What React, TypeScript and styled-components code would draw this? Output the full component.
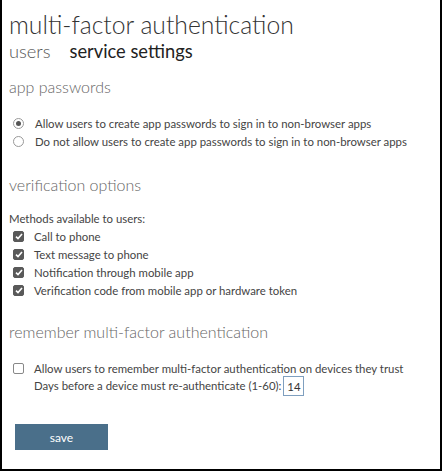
import React from "react";
import styled, { createGlobalStyle } from "styled-components";

const Global = createGlobalStyle`
  html, body { margin: 0; padding: 0; background: #fff; }
  body { font-family: "Lato", "Open Sans", sans-serif; }
`;

const Frame = styled.div`
  box-sizing: border-box;
  width: 442px;
  height: 471px;
  border: 2px solid #000;
  border-top: none;
  padding: 9px 0 0 7px;
  display: flex;
  flex-direction: column;
  color: #444;
  white-space: nowrap;
`;

const Title = styled.h1`
  margin: 0;
  font-weight: 300;
  font-size: 24.7px;
  line-height: 31px;
  color: #333;
`;

const Tabs = styled.div`
  display: flex;
  gap: 19px;
`;

const Tab = styled.span<{ $active?: boolean }>`
  font-size: 18.3px;
  line-height: 22px;
  font-weight: ${(p) => (p.$active ? 400 : 300)};
  color: ${(p) => (p.$active ? "#222" : "#555")};
`;

const Section = styled.section<{ $top: number }>`
  margin-top: ${(p) => p.$top}px;
  display: flex;
  flex-direction: column;
`;

const Heading = styled.h2<{ $gap: number }>`
  margin: 0 0 ${(p) => p.$gap}px 0;
  font-weight: 300;
  font-size: 16px;
  line-height: 22px;
  color: #666;
`;

const Row = styled.label`
  display: flex;
  align-items: center;
  height: 18px;
  font-size: 11.4px;
  color: #444;
`;

const Label = styled.span`
  font-size: 11.4px;
  line-height: 16px;
  color: #444;
`;

const RadioDot = styled.span<{ $on?: boolean }>`
  box-sizing: border-box;
  flex-shrink: 0;
  width: 11px;
  height: 11px;
  border-radius: 50%;
  border: 1px solid #999;
  margin: 0 11px 0 4px;
  display: flex;
  align-items: center;
  justify-content: center;
  &::after {
    content: "";
    display: ${(p) => (p.$on ? "block" : "none")};
    width: 5px;
    height: 5px;
    border-radius: 50%;
    background: #555;
  }
`;

const Box = styled.span<{ $on?: boolean }>`
  box-sizing: border-box;
  flex-shrink: 0;
  width: 11px;
  height: 11px;
  border-radius: 2px;
  margin: 0 10px 0 4px;
  display: flex;
  align-items: center;
  justify-content: center;
  background: ${(p) => (p.$on ? "#595959" : "#fff")};
  border: 1px solid ${(p) => (p.$on ? "#595959" : "#888")};
`;

const Indent = styled.div`
  display: flex;
  align-items: center;
  padding-left: 25px;
  height: 18px;
  gap: 2px;
`;

const NumberBox = styled.span`
  box-sizing: border-box;
  width: 21px;
  height: 20px;
  border: 1px solid #7f9fbf;
  display: flex;
  align-items: center;
  justify-content: center;
  font-size: 11.4px;
  color: #333;
`;

const SaveButton = styled.button`
  margin: 29px 0 0 6px;
  width: 93px;
  height: 26px;
  border: none;
  background: #4a6f8a;
  color: #fff;
  font-family: "Lato", "Open Sans", sans-serif;
  font-size: 12px;
  padding: 0;
`;

const Check = () => (
  <svg width="8" height="7" viewBox="0 0 8 7">
    <path d="M1 3.6 L3 5.6 L7 1" fill="none" stroke="#fff" strokeWidth="1.6" />
  </svg>
);

const methods = [
  "Call to phone",
  "Text message to phone",
  "Notification through mobile app",
  "Verification code from mobile app or hardware token",
];

export default function App() {
  return (
    <>
      <Global />
      <Frame>
        <Title>multi-factor authentication</Title>
        <Tabs>
          <Tab>users</Tab>
          <Tab $active>service settings</Tab>
        </Tabs>
        <Section $top={14}>
          <Heading $gap={16}>app passwords</Heading>
          <Row>
            <RadioDot $on />
            Allow users to create app passwords to sign in to non-browser apps
          </Row>
          <Row>
            <RadioDot />
            Do not allow users to create app passwords to sign in to non-browser apps
          </Row>
        </Section>
        <Section $top={24}>
          <Heading $gap={15}>verification options</Heading>
          <Label>Methods available to users:</Label>
          {methods.map((m) => (
            <Row key={m}>
              <Box $on>
                <Check />
              </Box>
              {m}
            </Row>
          ))}
        </Section>
        <Section $top={22}>
          <Heading $gap={16}>remember multi-factor authentication</Heading>
          <Row>
            <Box />
            Allow users to remember multi-factor authentication on devices they trust
          </Row>
          <Indent>
            <Label>Days before a device must re-authenticate (1-60):</Label>
            <NumberBox>14</NumberBox>
          </Indent>
        </Section>
        <SaveButton>save</SaveButton>
      </Frame>
    </>
  );
}
